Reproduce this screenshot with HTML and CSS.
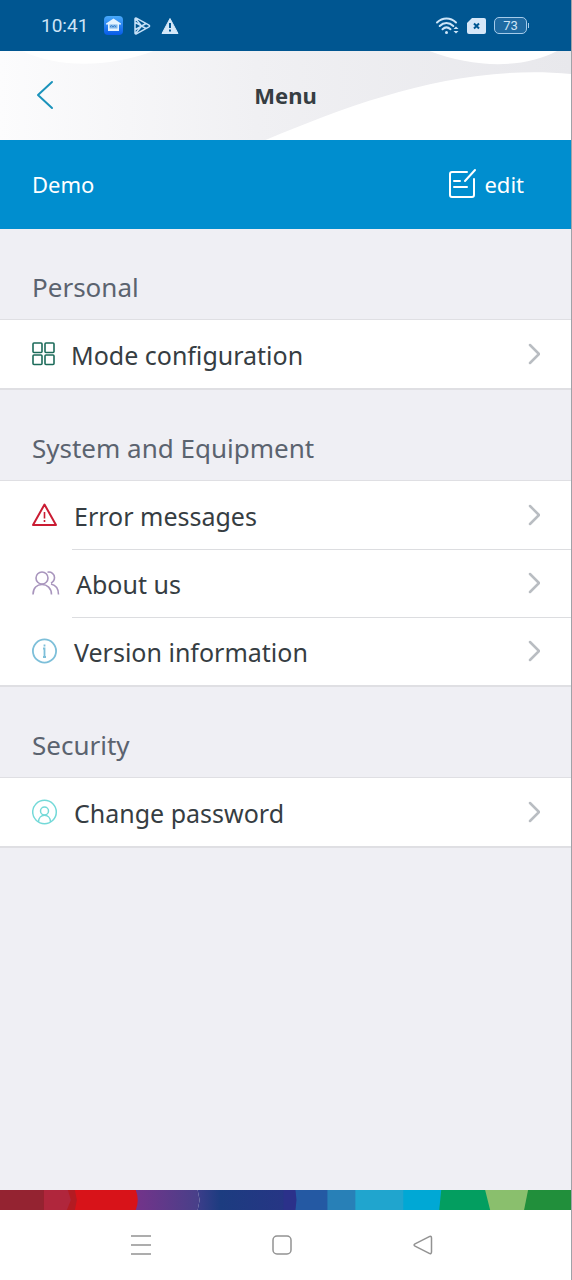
FILE: index.html
```html
<!DOCTYPE html>
<html lang="en">
<head>
<meta charset="utf-8">
<meta name="viewport" content="width=device-width, initial-scale=1">
<title>Menu</title>
<link rel="stylesheet" href="styles.css">
</head>
<body>
<div class="screen">
  <div class="status">
    <div class="status-group">
      <span class="clock">10:41</span>
      <svg width="19" height="19" viewBox="0 0 19 19" aria-hidden="true"><defs><linearGradient id="app" x1="0" y1="0" x2="0" y2="1"><stop offset="0" stop-color="#48a9fa"/><stop offset="1" stop-color="#075be8"/></linearGradient></defs><rect width="19" height="19" rx="4" fill="url(#app)"/><path d="M2 7.500 9.500 2.500l7.500 5v1h-2V15H4V8.500H2z" fill="#e4f3ff"/><path d="M5.500 8.500h8v4h-8z" fill="#7db5e8"/><path d="m6 11 1.500-1.500L9 11l1.500-1.500L12 11" fill="none" stroke="#3c82cf"/></svg>
      <svg width="18" height="18" viewBox="0 0 18 18" fill="none" stroke="#c5e0f7" stroke-width="1.500" stroke-linejoin="round" aria-hidden="true"><path d="M2 2v14c0 1 .7 1.200 1.400.800L16 9.800c.800-.500.800-1.100 0-1.600L3.400 1.200C2.700.800 2 1 2 2zM2.500 1.500 8.500 9l-6 7.500M2.500 5.500l10.500 6M2.500 12.500l10.500-6"/></svg>
      <svg width="18" height="18" viewBox="0 0 18 18" aria-hidden="true"><path d="M9 1.500 17 16.500H1z" fill="#d3e7f8" stroke="#d3e7f8" stroke-linejoin="round"/><path d="M9 6v5M9 12.500v2" stroke="#005691" stroke-width="2"/></svg>
    </div>
    <div class="status-group status-right">
      <svg width="24" height="20" viewBox="0 0 24 20" fill="none" stroke="#cde5f8" stroke-width="2" stroke-linecap="round" aria-hidden="true"><path d="M2 6.500c5.500-5.300 13.500-5.300 19 0M4.700 10c4-4 9.500-4 13.600 0M7.500 13.200c2.300-2.200 5.500-2.200 8 0"/><circle cx="11.500" cy="16.500" r="1.500" fill="#cde5f8" stroke="none"/><path d="m18.500 13 2.500-2.500 2.500 2.500zM18.500 15l2.500 2.500 2.500-2.500z" fill="#cde5f8" stroke="none"/></svg>
      <svg width="19" height="16" viewBox="0 0 19 16" aria-hidden="true"><path d="M5 0h12a2 2 0 0 1 2 2v12a2 2 0 0 1-2 2H2a2 2 0 0 1-2-2V5z" fill="#d6e7f8"/><path d="m7 5.500 5 5m0-5-5 5" stroke="#005691" stroke-width="2"/></svg>
      <span class="battery">73</span>
    </div>
  </div>

  <header class="header">
    <svg class="waves" viewBox="0 0 572 89" preserveAspectRatio="none" aria-hidden="true"><defs><linearGradient id="haze"><stop offset="0" stop-color="#fcfcfd"/><stop offset=".45" stop-color="#f0f0f3"/><stop offset="1" stop-color="#e8e8ec"/></linearGradient></defs><path d="M0 0h572v89H0z" fill="url(#haze)"/><path d="M22 0c36 17 86 17 132 0zM430 0c45 17 94 18 128 0zM266 89C360 50 460 13 572 23v66z" fill="#fff"/></svg>
    <button class="back" type="button" aria-label="Back"><svg width="18" height="30" viewBox="0 0 18 30" fill="none" stroke="#1b93bb" stroke-width="2" stroke-linecap="round" stroke-linejoin="round"><path d="M16 2 2 15l14 13"/></svg></button>
    <h1 class="title">Menu</h1>
  </header>

  <div class="profile">
    <span>Demo</span>
    <button class="edit" type="button">
      <svg width="28" height="31" viewBox="0 0 28 31" fill="none" stroke="#fff" stroke-width="2" stroke-linecap="round" stroke-linejoin="round" aria-hidden="true"><path d="M19 4H4a2 2 0 0 0-2 2v21a2 2 0 0 0 2 2h20a2 2 0 0 0 2-2V11M27 2 17 13M6 13h6M6 19h13"/></svg>
      <span>edit</span>
    </button>
  </div>

  <main class="content">
    <section>
      <h2 class="group">Personal</h2>
      <ul class="list">
        <li class="item"><button class="row" type="button">
          <svg width="23" height="24" viewBox="0 0 23 24" fill="none" stroke="#1c6b5a" stroke-width="1.600" aria-hidden="true"><rect x="1" y="1" width="9" height="9.500" rx="1"/><rect x="13" y="1" width="9" height="9.500" rx="1"/><rect x="1" y="13" width="9" height="9.500" rx="1"/><rect x="13" y="13" width="9" height="9.500" rx="1"/></svg>
          <span class="label">Mode configuration</span>
          <svg class="chevron" width="12" height="22" viewBox="0 0 12 22" aria-hidden="true"><path d="m2 2 9 9-9 9"/></svg>
        </button></li>
      </ul>
    </section>
    <section>
      <h2 class="group">System and Equipment</h2>
      <ul class="list">
        <li class="item"><button class="row" type="button">
          <svg width="26" height="24" viewBox="0 0 26 24" fill="none" stroke="#ca1c33" stroke-width="2" stroke-linejoin="round" aria-hidden="true"><path d="M12.500 1.500 24 22H1z"/><path d="M12.500 9v6.500M12.500 17v2" stroke-width="1.600"/></svg>
          <span class="label">Error messages</span>
          <svg class="chevron" width="12" height="22" viewBox="0 0 12 22" aria-hidden="true"><path d="m2 2 9 9-9 9"/></svg>
        </button></li>
        <li class="item"><button class="row" type="button">
          <svg width="28" height="24" viewBox="0 0 28 24" fill="none" stroke="#a895bd" stroke-width="1.600" aria-hidden="true"><circle cx="10" cy="7" r="6"/><path d="M1 23.500C1 17 5 13.500 10 13.500S19.500 17 19.500 23.500M15.500 1.200c4-.8 7 2 7 5.300 0 2.500-1.500 4.500-3.500 5.500M19 13c4.500 1 7.500 5 7.500 10.500"/></svg>
          <span class="label">About us</span>
          <svg class="chevron" width="12" height="22" viewBox="0 0 12 22" aria-hidden="true"><path d="m2 2 9 9-9 9"/></svg>
        </button></li>
        <li class="item"><button class="row" type="button">
          <svg width="26" height="26" viewBox="0 0 26 26" fill="none" stroke="#7dbfd9" stroke-width="1.800" aria-hidden="true"><circle cx="12.500" cy="13" r="11.600"/><path d="M11 10.500h1.500V19M11 19h3M12.500 6.500v2"/></svg>
          <span class="label">Version information</span>
          <svg class="chevron" width="12" height="22" viewBox="0 0 12 22" aria-hidden="true"><path d="m2 2 9 9-9 9"/></svg>
        </button></li>
      </ul>
    </section>
    <section>
      <h2 class="group">Security</h2>
      <ul class="list">
        <li class="item"><button class="row" type="button">
          <svg width="26" height="26" viewBox="0 0 26 26" fill="none" stroke="#73d9d8" stroke-width="1.500" aria-hidden="true"><circle cx="12.500" cy="13" r="11.800"/><circle cx="12.500" cy="12" r="4"/><path d="M6.500 23c0-9 12-9 12 0"/></svg>
          <span class="label">Change password</span>
          <svg class="chevron" width="12" height="22" viewBox="0 0 12 22" aria-hidden="true"><path d="m2 2 9 9-9 9"/></svg>
        </button></li>
      </ul>
    </section>
  </main>

  <svg class="ribbon" viewBox="0 0 572 20" preserveAspectRatio="none" aria-hidden="true">
    <defs>
      <linearGradient id="violet"><stop offset="0" stop-color="#75338a"/><stop offset="1" stop-color="#474089"/></linearGradient>
      <linearGradient id="navy"><stop offset="0" stop-color="#3c3d8a"/><stop offset=".25" stop-color="#1c3c80"/><stop offset="1" stop-color="#273585"/></linearGradient>
    </defs>
    <path d="M0 0h45v20H0z" fill="#942331"/>
    <path d="M44 0h34v20H44z" fill="#b31b22"/>
    <path d="M44 0h24l3 10-4 10H44z" fill="#b0263c"/>
    <path d="M134 0h64l2 10-2 10h-64z" fill="url(#violet)"/>
    <path d="M75 0h61q4 10 0 20H75l2-10z" fill="#d81319"/>
    <path d="M198 0h92v20h-92l2-10z" fill="url(#navy)"/>
    <path d="M284 0h16v20h-16z" fill="#2b318a"/>
    <path d="M296 0h33v20h-33l1-10z" fill="#2459a3"/>
    <path d="M328 0h29v20h-29z" fill="#2880b7"/>
    <path d="M356 0h49v20h-49z" fill="#20a5ce"/>
    <path d="M404 0h39v20h-39z" fill="#00a8d5"/>
    <path d="M442 0h46l4 20h-52z" fill="#039e60"/>
    <path d="M486 0h44v20h-39z" fill="#8abf6d"/>
    <path d="M529 0h43v20h-47z" fill="#218f3b"/>
  </svg>

  <nav class="system" aria-label="System">
    <button class="key" type="button" aria-label="Recent apps"><svg width="22" height="22" viewBox="0 0 22 22"><path d="M1 2h20M1 11h20M1 20h20"/></svg></button>
    <button class="key" type="button" aria-label="Home"><svg width="22" height="22" viewBox="0 0 22 22"><rect x="2" y="2" width="18" height="18" rx="4"/></svg></button>
    <button class="key" type="button" aria-label="Back"><svg width="22" height="22" viewBox="0 0 22 22"><path d="M19.500 4v14c0 1.500-1 2-2.200 1.400L3 12.200c-1.200-.6-1.200-1.800 0-2.400l14.300-7.200C18.500 2 19.500 2.500 19.500 4z"/></svg></button>
  </nav>
</div>
</body>
</html>
```
FILE: styles.css
```css
* {
  box-sizing: border-box;
}

body {
  margin: 0;
  font-family: "Noto Sans", sans-serif;
  color: #363d42;
  background: #efeff4;
}

button {
  margin: 0;
  padding: 0;
  border: 0;
  background: none;
  color: inherit;
  font: inherit;
}

svg {
  display: block;
  flex: none;
}

.screen {
  display: flex;
  flex-direction: column;
  min-height: 100vh;
  border-right: 1px solid #a0a2a8;
}

.status {
  display: flex;
  align-items: center;
  justify-content: space-between;
  height: 51px;
  padding: 0 41px 0 41px;
  background: #005691;
  color: #cde4f6;
  font-family: Roboto, sans-serif;
}

.status-group {
  display: flex;
  align-items: center;
  gap: 10px;
}

.status-right {
  gap: 8px;
}

.clock {
  margin-right: 6px;
  font-size: 19px;
}

.battery {
  position: relative;
  width: 33px;
  height: 17px;
  margin-right: 3px;
  border: 1px solid #a5cbea;
  border-radius: 5px;
  background: #1f6aa2;
  font-size: 13px;
  line-height: 16px;
  text-align: center;
}

.battery::after {
  content: "";
  position: absolute;
  top: 5px;
  right: -3px;
  width: 1px;
  height: 5px;
  background: #a5cbea;
}

.header {
  position: relative;
  display: grid;
  grid-template-columns: 1fr auto 1fr;
  align-items: center;
  height: 89px;
  padding: 0 36px 2px;
}

.waves {
  position: absolute;
  inset: 0;
  width: 100%;
  height: 100%;
}

.back,
.title {
  position: relative;
}

.back {
  justify-self: start;
}

.title {
  margin: 0;
  font-size: 22px;
  font-weight: 700;
  line-height: 32px;
}

.profile {
  display: flex;
  align-items: center;
  justify-content: space-between;
  height: 89px;
  padding: 0 47px 2px 32px;
  background: #008ecf;
  color: #fff;
  font-size: 22px;
}

.edit {
  display: flex;
  align-items: center;
  gap: 8px;
}

.content {
  flex: 1;
}

.group {
  margin: 0;
  padding: 41px 32px 15px;
  color: #5b636f;
  font-size: 26px;
  font-weight: 400;
  line-height: 34px;
}

.list {
  margin: 0;
  padding: 0;
  list-style: none;
  background: #fff;
  border-top: 1px solid #dfdfe3;
  border-bottom: 2px solid #dfdfe3;
}

.item + .item {
  background: linear-gradient(#dcdde0, #dcdde0) 72px 0 / 100% 1px no-repeat;
}

.row {
  display: flex;
  align-items: center;
  gap: 16px;
  width: 100%;
  height: 68px;
  padding: 0 31px 0 32px;
  text-align: left;
  font-size: 25px;
}

.label {
  flex: 1;
  padding-top: 2px;
}

.chevron {
  fill: none;
  stroke: #b9bdc2;
  stroke-width: 2.5px;
  stroke-linecap: round;
  stroke-linejoin: round;
}

.ribbon {
  width: 100%;
  height: 20px;
}

.system {
  display: flex;
  justify-content: center;
  gap: 119px;
  padding: 24px 7px 24px 0;
  background: #fff;
}

.key svg {
  fill: none;
  stroke: #929292;
  stroke-width: 1.5px;
}
```
